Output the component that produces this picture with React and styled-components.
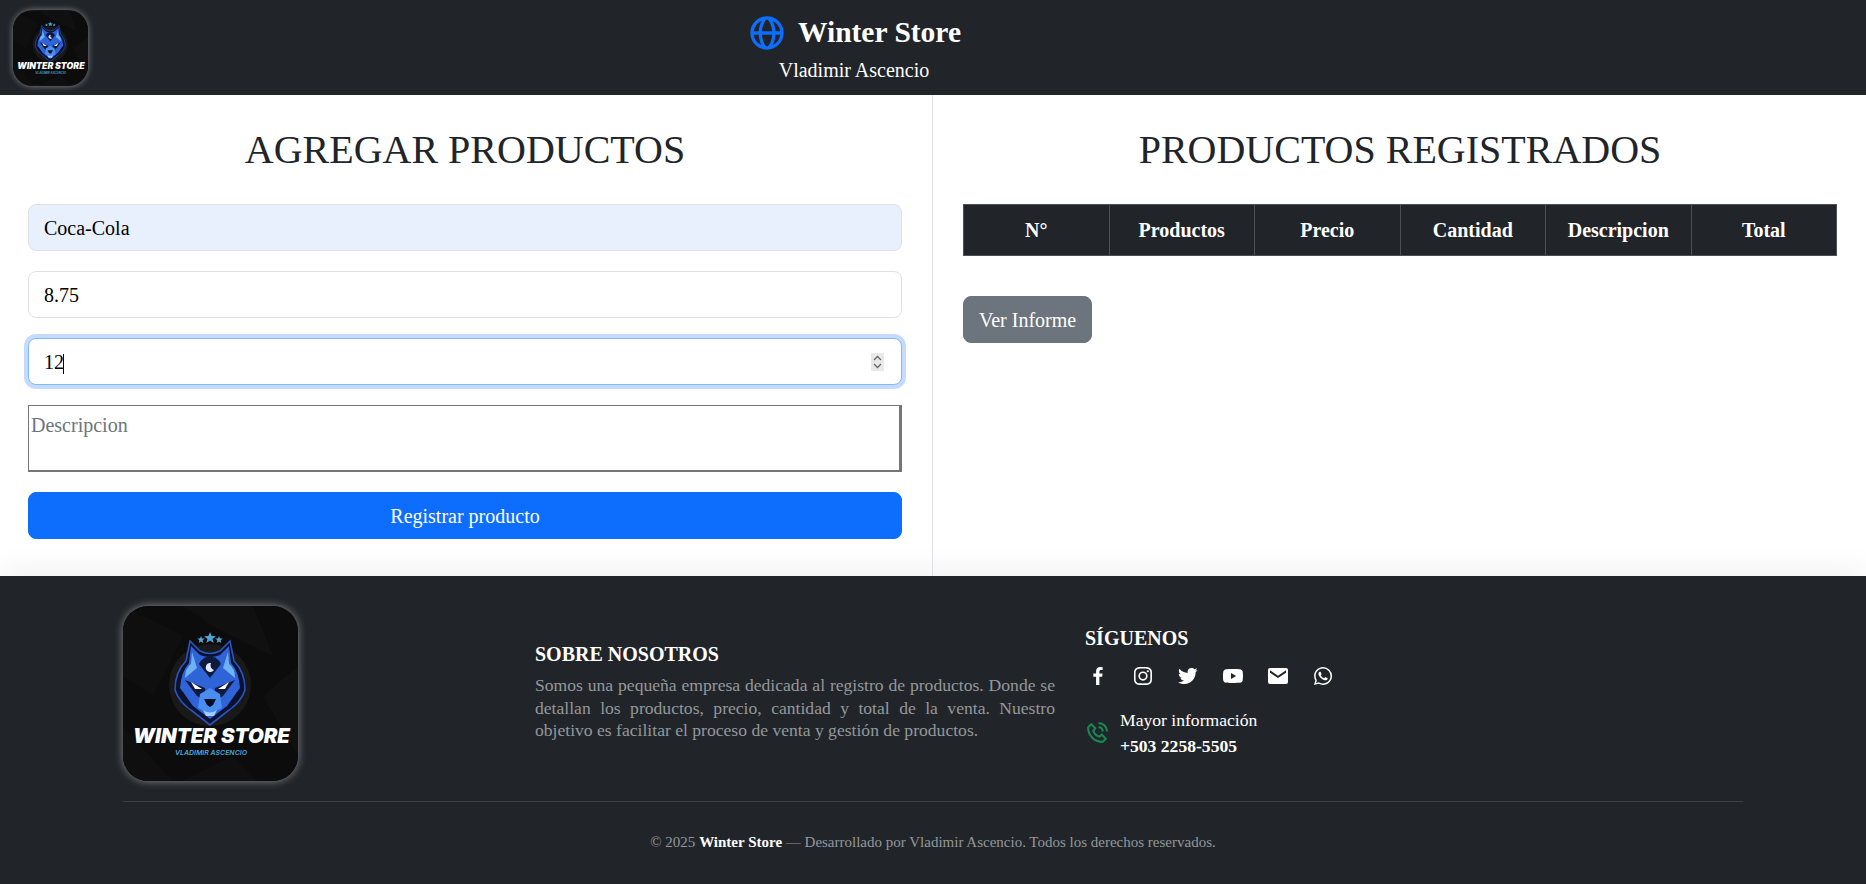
import React, { useEffect, useRef } from "react";
import styled, { createGlobalStyle } from "styled-components";
import {
  BiGlobe,
  BiLogoFacebook,
  BiLogoInstagram,
  BiLogoTwitter,
  BiLogoYoutube,
  BiSolidEnvelope,
  BiLogoWhatsapp,
  BiPhoneCall,
} from "react-icons/bi";

const GlobalStyle = createGlobalStyle`
  * {
    box-sizing: border-box;
  }
  body {
    margin: 0;
    background: #fff;
    color: #212529;
    font-family: "Liberation Serif", "Times New Roman", serif;
    font-size: 16px;
    line-height: 1.5;
  }
`;

const Header = styled.header`
  display: flex;
  align-items: center;
  height: 95px;
  padding: 0 246px 0 13px;
  background: #212529;
`;

const HeaderLogo = styled.div`
  width: 75px;
  height: 76px;
  flex-shrink: 0;
  border-radius: 20px;
  overflow: hidden;
  box-shadow: 0 0 6px rgba(255, 255, 255, 0.45);
`;

const Brand = styled.div`
  flex: 1;
  display: flex;
  flex-direction: column;
  align-items: center;
  color: #fff;
`;

const BrandRow = styled.div`
  display: flex;
  align-items: center;
  gap: 11px;
  height: 44px;
  color: #0d6efd;
`;

const BrandName = styled.span`
  color: #fff;
  font-size: 29.5px;
  font-weight: 700;
`;

const BrandOwner = styled.span`
  font-size: 20px;
  line-height: 30px;
`;

const Main = styled.main`
  display: grid;
  grid-template-columns: 1fr 1fr;
  height: 481px;
`;

const LeftPanel = styled.section`
  padding: 31px 30px 0 28px;
  border-right: 1px solid #dee2e6;
`;

const RightPanel = styled.section`
  padding: 31px 29px 0 30px;
`;

const Title = styled.h1`
  margin: 0 0 30px;
  font-size: 40px;
  font-weight: 400;
  line-height: 48px;
  text-align: center;
`;

const Form = styled.form`
  display: flex;
  flex-direction: column;
  gap: 20px;
`;

const Input = styled.input`
  display: block;
  width: 100%;
  height: 47px;
  padding: 2px 15px 0;
  border: 1px solid #dee2e6;
  border-radius: 8px;
  background: ${({ $filled }) => ($filled ? "#e8f0fe" : "#fff")};
  color: #000;
  font-family: inherit;
  font-size: 20px;
  caret-color: transparent;
  &:focus {
    outline: 0;
    border-color: #86b7fe;
    box-shadow: 0 0 0 4px rgba(13, 110, 253, 0.25);
  }
  &::-webkit-inner-spin-button {
    appearance: none;
  }
`;

const NumberField = styled.div`
  position: relative;
`;

const Caret = styled.span`
  position: absolute;
  top: 16px;
  left: 35px;
  width: 1px;
  height: 20px;
  background: #000;
`;

const Spinner = styled.svg`
  position: absolute;
  top: 15px;
  right: 18px;
  width: 13px;
  height: 18px;
  background: #e9e9e9;
`;

const Textarea = styled.textarea`
  display: block;
  width: 100%;
  height: 67px;
  padding: 4px 2px 2px;
  border-style: solid;
  border-width: 1px 3px 2px 1px;
  border-color: #767676;
  border-radius: 0;
  font-family: inherit;
  font-size: 20px;
  line-height: 30px;
  resize: none;
  &::placeholder {
    color: #6c757d;
  }
`;

const Button = styled.button`
  display: block;
  width: ${({ $block }) => ($block ? "100%" : "auto")};
  height: 47px;
  padding: 2px 15px 0;
  border: 1px solid ${({ $tone }) => $tone};
  border-radius: 8px;
  background: ${({ $tone }) => $tone};
  color: #fff;
  font-family: inherit;
  font-size: 20px;
`;

const Table = styled.table`
  width: 100%;
  margin-bottom: 40px;
  border-collapse: collapse;
  table-layout: fixed;
`;

const Th = styled.th`
  height: 51px;
  padding: 0;
  border: 1px solid #4d5154;
  background: #212529;
  color: #fff;
  font-size: 20px;
  font-weight: 700;
  text-align: center;
`;

const Footer = styled.footer`
  height: 308px;
  padding: 30px 123px 0;
  background: #212529;
  box-shadow: 0 -6px 30px rgba(0, 0, 0, 0.06);
  color: #fff;
`;

const FooterRow = styled.div`
  display: flex;
  align-items: center;
  padding-bottom: 20px;
  border-bottom: 1px solid #3b3f44;
`;

const FooterLogo = styled.div`
  width: 175px;
  height: 175px;
  flex-shrink: 0;
  margin-right: 237px;
  border-radius: 25px;
  overflow: hidden;
  box-shadow: 0 0 8px rgba(255, 255, 255, 0.45);
`;

const About = styled.div`
  width: 520px;
  margin-right: 30px;
  padding-bottom: 3px;
`;

const FooterHeading = styled.h5`
  margin: 0 0 8px;
  font-size: 20px;
  font-weight: 700;
  line-height: 24px;
`;

const AboutText = styled.p`
  margin: 0;
  color: #94989c;
  font-size: 17.6px;
  line-height: 22.6px;
  text-align: justify;
`;

const Social = styled.div`
  display: flex;
  flex-direction: column;
  padding-bottom: 3px;
`;

const SocialRow = styled.div`
  display: flex;
  gap: 21px;
  margin: 6px 0 19px 1px;
`;

const SocialLink = styled.a`
  display: flex;
  color: #fff;
  font-size: 24px;
`;

const Contact = styled.div`
  display: flex;
  align-items: center;
  gap: 10px;
`;

const ContactIcon = styled.span`
  display: flex;
  color: #198754;
  font-size: 25px;
`;

const ContactText = styled.div`
  font-size: 17.6px;
  line-height: 26px;
`;

const Copyright = styled.p`
  margin: 29px 0 0;
  color: #94989c;
  font-size: 15px;
  line-height: 23px;
  text-align: center;
  strong {
    color: #fff;
  }
`;

const columns = ["N°", "Productos", "Precio", "Cantidad", "Descripcion", "Total"];

const socials = [
  BiLogoFacebook,
  BiLogoInstagram,
  BiLogoTwitter,
  BiLogoYoutube,
  BiSolidEnvelope,
  BiLogoWhatsapp,
];

const Logo = () => (
  <svg viewBox="0 0 175 175" width="100%" height="100%" style={{ display: "block" }}>
    <rect width="175" height="175" fill="#0c0c0d" />
    <path d="M0 0L60 30 30 90 0 70Z" fill="#0f0f10" />
    <path d="M60 0L130 0 150 50 90 20Z" fill="#101011" />
    <path d="M175 60L140 90 175 150Z" fill="#101011" />
    <path d="M0 120L50 175H0Z" fill="#0f0f10" />
    <path d="M60 175L110 150 135 175Z" fill="#0f0f10" />
    <circle cx="87" cy="79" r="41" fill="#191919" />
    <g fill="#4aa8dc">
      <path d="M87 26l1.6 4 4.3.2-3.4 2.7 1.2 4.1-3.7-2.4-3.7 2.4 1.2-4.1-3.4-2.7 4.3-.2z" />
      <path d="M78 30l1 2.5 2.7.1-2.1 1.7.7 2.6-2.3-1.5-2.3 1.5.7-2.6-2.1-1.7 2.7-.1z" />
      <path d="M96 30l1 2.5 2.7.1-2.1 1.7.7 2.6-2.3-1.5-2.3 1.5.7-2.6-2.1-1.7 2.7-.1z" />
    </g>
    <path
      d="M67 35L77 45Q87 50 97 45L107 35L111 55Q122 66 122 84Q118 96 106 104L87 119L68 104Q56 96 52 84Q52 66 63 55Z"
      fill="#0a1230"
      stroke="#2a55c0"
      strokeWidth="1.6"
    />
    <path
      d="M68 40L77 49Q87 53 97 49L106 40L108 57Q116 66 117 82L104 100L87 113L70 100L57 82Q58 66 66 57Z"
      fill="#2f63d8"
    />
    <path d="M69 46L74 62 62 72Q62 62 68 58Z" fill="#6fb2f2" />
    <path d="M105 46L100 62 112 72Q112 62 106 58Z" fill="#6fb2f2" />
    <path d="M87 50Q78 52 76 58L87 72 98 58Q96 52 87 50Z" fill="#101a3c" />
    <path d="M88 57a4.5 4.5 0 1 0 3 7a5 5 0 0 1-3-7z" fill="#dfe9ff" />
    <path d="M62 74L82 82 84 96 74 90Z" fill="#101a3c" />
    <path d="M112 74L92 82 90 96 100 90Z" fill="#101a3c" />
    <path d="M68 76L79 83 72 83Z" fill="#fff" />
    <path d="M106 76L95 83 102 83Z" fill="#fff" />
    <path d="M77 88L87 82 97 88 99 102 87 108 75 102Z" fill="#4a8df0" />
    <path d="M60 86L70 104 66 102 57 90Z" fill="#0a1230" />
    <path d="M114 86L104 104 108 102 117 90Z" fill="#0a1230" />
    <path d="M81 93H93L90 99 87 101 84 99Z" fill="#0a0f1f" />
    <path d="M80 104Q87 109 94 104L91 110H83Z" fill="#9fd0ff" />
    <path d="M80 111L87 116 94 111 87 113Z" fill="#0a1230" />
    <text
      x="10"
      y="137"
      fill="#fff"
      fontFamily="Inter, 'Open Sans', sans-serif"
      fontSize="20"
      fontStyle="italic"
      fontWeight="900"
      textLength="157"
      lengthAdjust="spacingAndGlyphs"
    >
      WINTER STORE
    </text>
    <text
      x="52"
      y="149"
      fill="#4aa8dc"
      fontFamily="Inter, 'Open Sans', sans-serif"
      fontSize="6.4"
      fontStyle="italic"
      fontWeight="600"
      textLength="72"
      lengthAdjust="spacingAndGlyphs"
    >
      VLADIMIR ASCENCIO
    </text>
  </svg>
);

export default function App() {
  const quantityRef = useRef(null);

  useEffect(() => {
    quantityRef.current.focus();
  }, []);

  return (
    <>
      <GlobalStyle />
      <Header>
        <HeaderLogo>
          <Logo />
        </HeaderLogo>
        <Brand>
          <BrandRow>
            <BiGlobe size={40} />
            <BrandName>Winter Store</BrandName>
          </BrandRow>
          <BrandOwner>Vladimir Ascencio</BrandOwner>
        </Brand>
      </Header>
      <Main>
        <LeftPanel>
          <Title>AGREGAR PRODUCTOS</Title>
          <Form onSubmit={(e) => e.preventDefault()}>
            <Input $filled type="text" placeholder="Producto" defaultValue="Coca-Cola" />
            <Input type="text" placeholder="Precio" defaultValue="8.75" />
            <NumberField>
              <Input ref={quantityRef} type="number" placeholder="Cantidad" defaultValue="12" />
              <Caret />
              <Spinner viewBox="0 0 13 18" fill="none" stroke="#666" strokeWidth="1.3">
                <path d="M3 7l3.5-3.5L10 7M3 11l3.5 3.5L10 11" />
              </Spinner>
            </NumberField>
            <Textarea placeholder="Descripcion" />
            <Button $block $tone="#0d6efd" type="submit">
              Registrar producto
            </Button>
          </Form>
        </LeftPanel>
        <RightPanel>
          <Title>PRODUCTOS REGISTRADOS</Title>
          <Table>
            <thead>
              <tr>
                {columns.map((col) => (
                  <Th key={col}>{col}</Th>
                ))}
              </tr>
            </thead>
          </Table>
          <Button $tone="#6c757d" type="button">
            Ver Informe
          </Button>
        </RightPanel>
      </Main>
      <Footer>
        <FooterRow>
          <FooterLogo>
            <Logo />
          </FooterLogo>
          <About>
            <FooterHeading>SOBRE NOSOTROS</FooterHeading>
            <AboutText>
              Somos una pequeña empresa dedicada al registro de productos. Donde se detallan los
              productos, precio, cantidad y total de la venta. Nuestro objetivo es facilitar el
              proceso de venta y gestión de productos.
            </AboutText>
          </About>
          <Social>
            <FooterHeading>SÍGUENOS</FooterHeading>
            <SocialRow>
              {socials.map((Icon, i) => (
                <SocialLink key={i} href="#">
                  <Icon />
                </SocialLink>
              ))}
            </SocialRow>
            <Contact>
              <ContactIcon>
                <BiPhoneCall />
              </ContactIcon>
              <ContactText>
                Mayor información
                <br />
                <strong>+503 2258-5505</strong>
              </ContactText>
            </Contact>
          </Social>
        </FooterRow>
        <Copyright>
          © 2025 <strong>Winter Store</strong> — Desarrollado por Vladimir Ascencio. Todos los
          derechos reservados.
        </Copyright>
      </Footer>
    </>
  );
}
